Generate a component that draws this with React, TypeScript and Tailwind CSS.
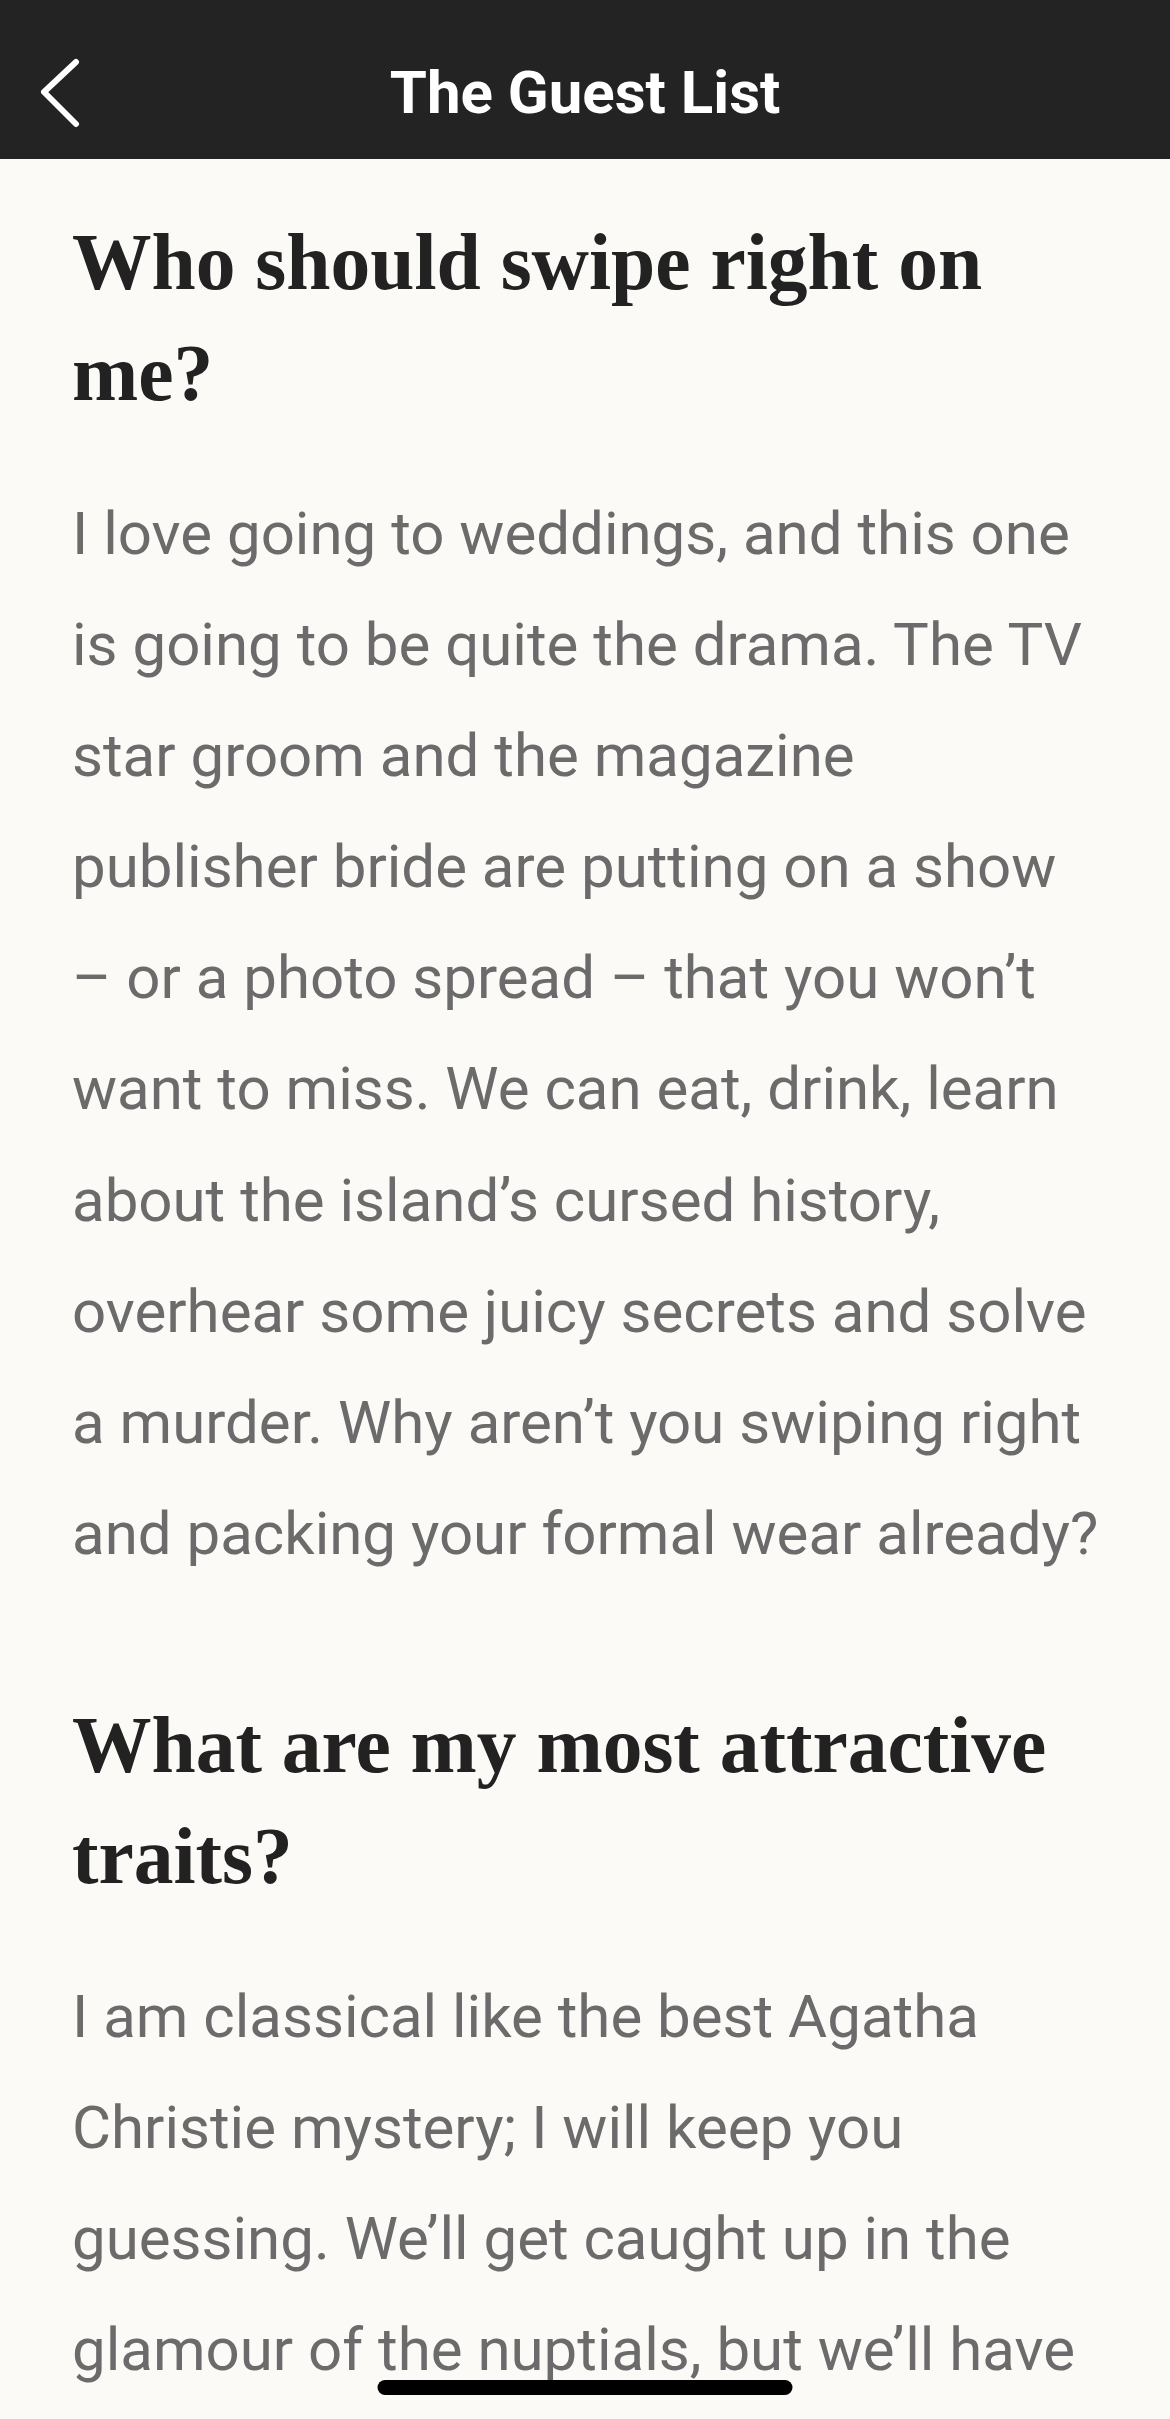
const sections = [
  {
    title: ["Who should swipe right on", "me?"],
    lines: [
      "I love going to weddings, and this one",
      "is going to be quite the drama. The TV",
      "star groom and the magazine",
      "publisher bride are putting on a show",
      "– or a photo spread – that you won’t",
      "want to miss. We can eat, drink, learn",
      "about the island’s cursed history,",
      "overhear some juicy secrets and solve",
      "a murder. Why aren’t you swiping right",
      "and packing your formal wear already?",
    ],
  },
  {
    title: ["What are my most attractive", "traits?"],
    lines: [
      "I am classical like the best Agatha",
      "Christie mystery; I will keep you",
      "guessing. We’ll get caught up in the",
      "glamour of the nuptials, but we’ll have",
    ],
  },
];

function BackIcon() {
  return (
    <svg width="44" height="70" viewBox="0 0 44 70" fill="none">
      <polyline
        points="38,4 6,34 38,66"
        stroke="white"
        strokeWidth="6"
        strokeLinecap="round"
        strokeLinejoin="round"
      />
    </svg>
  );
}

export default function App() {
  return (
    <div className="relative h-[2419px] w-[1170px] overflow-hidden bg-[#fcfaf6]">
      <header className="flex h-[159px] items-center bg-[#232323] pt-[27px]">
        <div className="flex w-[160px] items-center pl-[38px]">
          <BackIcon />
        </div>
        <h1 className="flex-1 text-center font-['Roboto',sans-serif] text-[60px] font-bold leading-none text-white">
          The Guest List
        </h1>
        <div className="w-[160px]" />
      </header>

      <main className="px-[72px] pt-[48px]">
        {sections.map((s, i) => (
          <section key={i} className={i > 0 ? "mt-[101px]" : ""}>
            <h2 className="font-['Liberation_Serif',serif] text-[79.5px] font-bold leading-[111px] text-[#222222]">
              {s.title.map((t) => (
                <span key={t} className="block whitespace-nowrap">
                  {t}
                </span>
              ))}
            </h2>
            <p className="mt-[49px] font-['Roboto',sans-serif] text-[60px] leading-[111.1px] text-[#6b6b6b]">
              {s.lines.map((l) => (
                <span key={l} className="block whitespace-nowrap">
                  {l}
                </span>
              ))}
            </p>
          </section>
        ))}
      </main>

      <div className="absolute bottom-[24px] left-1/2 h-[15px] w-[415px] -translate-x-1/2 rounded-full bg-black" />
    </div>
  );
}
